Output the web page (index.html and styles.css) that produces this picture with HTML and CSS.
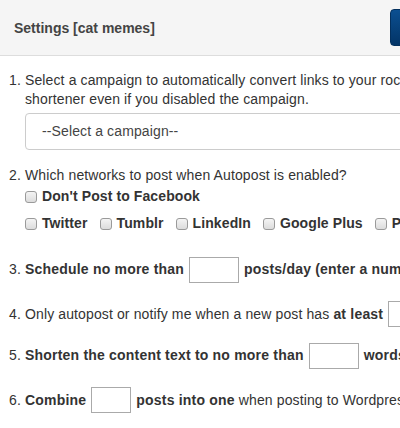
FILE: index.html
```html
<!DOCTYPE html>
<html>
<head>
<meta charset="utf-8">
<link rel="stylesheet" href="styles.css">
</head>
<body>
<div class="page">
  <div class="header">
    <div class="title">Settings [cat memes]</div>
    <button class="save">Save</button>
  </div>
  <ol class="settings">
    <li class="item item-1">
      <div class="desc">Select a campaign to automatically convert links to your rocket URL<br>shortener even if you disabled the campaign.</div>
      <div class="select">--Select a campaign--</div>
    </li>
    <li class="item item-2">
      <div class="desc">Which networks to post when Autopost is enabled?</div>
      <div class="checks first">
        <label class="check"><span class="box"></span>Don't Post to Facebook</label>
      </div>
      <div class="checks second">
        <label class="check"><span class="box"></span>Twitter</label>
        <label class="check"><span class="box"></span>Tumblr</label>
        <label class="check"><span class="box"></span>LinkedIn</label>
        <label class="check"><span class="box"></span>Google Plus</label>
        <label class="check"><span class="box"></span>Pinterest</label>
      </div>
    </li>
    <li class="item">
      <div class="row"><b>Schedule no more than</b><span class="field w50"></span><b>posts/day (enter a number)</b></div>
    </li>
    <li class="item item-4">
      <div class="row"><span>Only autopost or notify me when a new post has <b>at least</b></span><span class="field w50"></span><span>words</span></div>
    </li>
    <li class="item">
      <div class="row"><b>Shorten the content text to no more than</b><span class="field w50"></span><b>words</b></div>
    </li>
    <li class="item">
      <div class="row"><b>Combine</b><span class="field w40"></span><span><b>posts into one</b> when posting to Wordpress</span></div>
    </li>
  </ol>
</div>
</body>
</html>
```
FILE: styles.css
```css
html, body {
  margin: 0;
  padding: 0;
  background: #ffffff;
  overflow: hidden;
}
body {
  font-family: "Liberation Sans", Arial, sans-serif;
  font-size: 14px;
  color: #333333;
}
.page {
  width: 640px;
}
.header {
  height: 56px;
  background: #f5f5f5;
  border-bottom: 1px solid #dddddd;
  display: flex;
  align-items: center;
  padding-left: 14px;
  box-sizing: border-box;
}
.title {
  font-weight: bold;
  font-size: 14px;
  color: #444;
  width: 376px;
}
.save {
  height: 37px;
  width: 80px;
  border: 1px solid #03305e;
  border-radius: 4px;
  background: linear-gradient(#0b4f91, #033466);
  color: #fff;
  font-family: inherit;
  font-size: 14px;
}
.settings {
  margin: 0;
  padding: 15px 0 0 25px;
  line-height: 19px;
  letter-spacing: 0.12px;
}
.settings b {
  letter-spacing: 0.2px;
}
.item {
  margin-bottom: 25px;
}
.item-1 { margin-bottom: 16px; }
.select {
  margin-top: 4px;
  height: 37px;
  border: 1px solid #cccccc;
  border-radius: 4px;
  box-sizing: border-box;
  padding-left: 16px;
  display: flex;
  align-items: center;
  color: #444;
}
.item-2 { margin-bottom: 23px; }
.checks {
  display: flex;
  gap: 12px;
  font-weight: bold;
  letter-spacing: 0.1px;
}
.checks.first { margin-top: 2px; }
.checks.second { margin-top: 8px; }
.check {
  display: flex;
  align-items: center;
  gap: 5px;
}
.box {
  width: 10px;
  height: 10px;
  border: 1px solid #9a9a9a;
  border-radius: 3px;
  background: linear-gradient(#f4f4f4, #dcdcdc);
}
.row {
  display: flex;
  align-items: center;
  gap: 5px;
  white-space: nowrap;
  height: 26px;
}
.item:has(.row) {
  margin-bottom: 18px;
}
.settings .item-4 {
  margin-bottom: 15px;
}
.item:has(.row)::marker {
  line-height: 26px;
}
.field {
  display: inline-block;
  height: 26px;
  border: 1px solid #aaaaaa;
  box-sizing: border-box;
}
.w50 { width: 50px; }
.w40 { width: 40px; }
```
